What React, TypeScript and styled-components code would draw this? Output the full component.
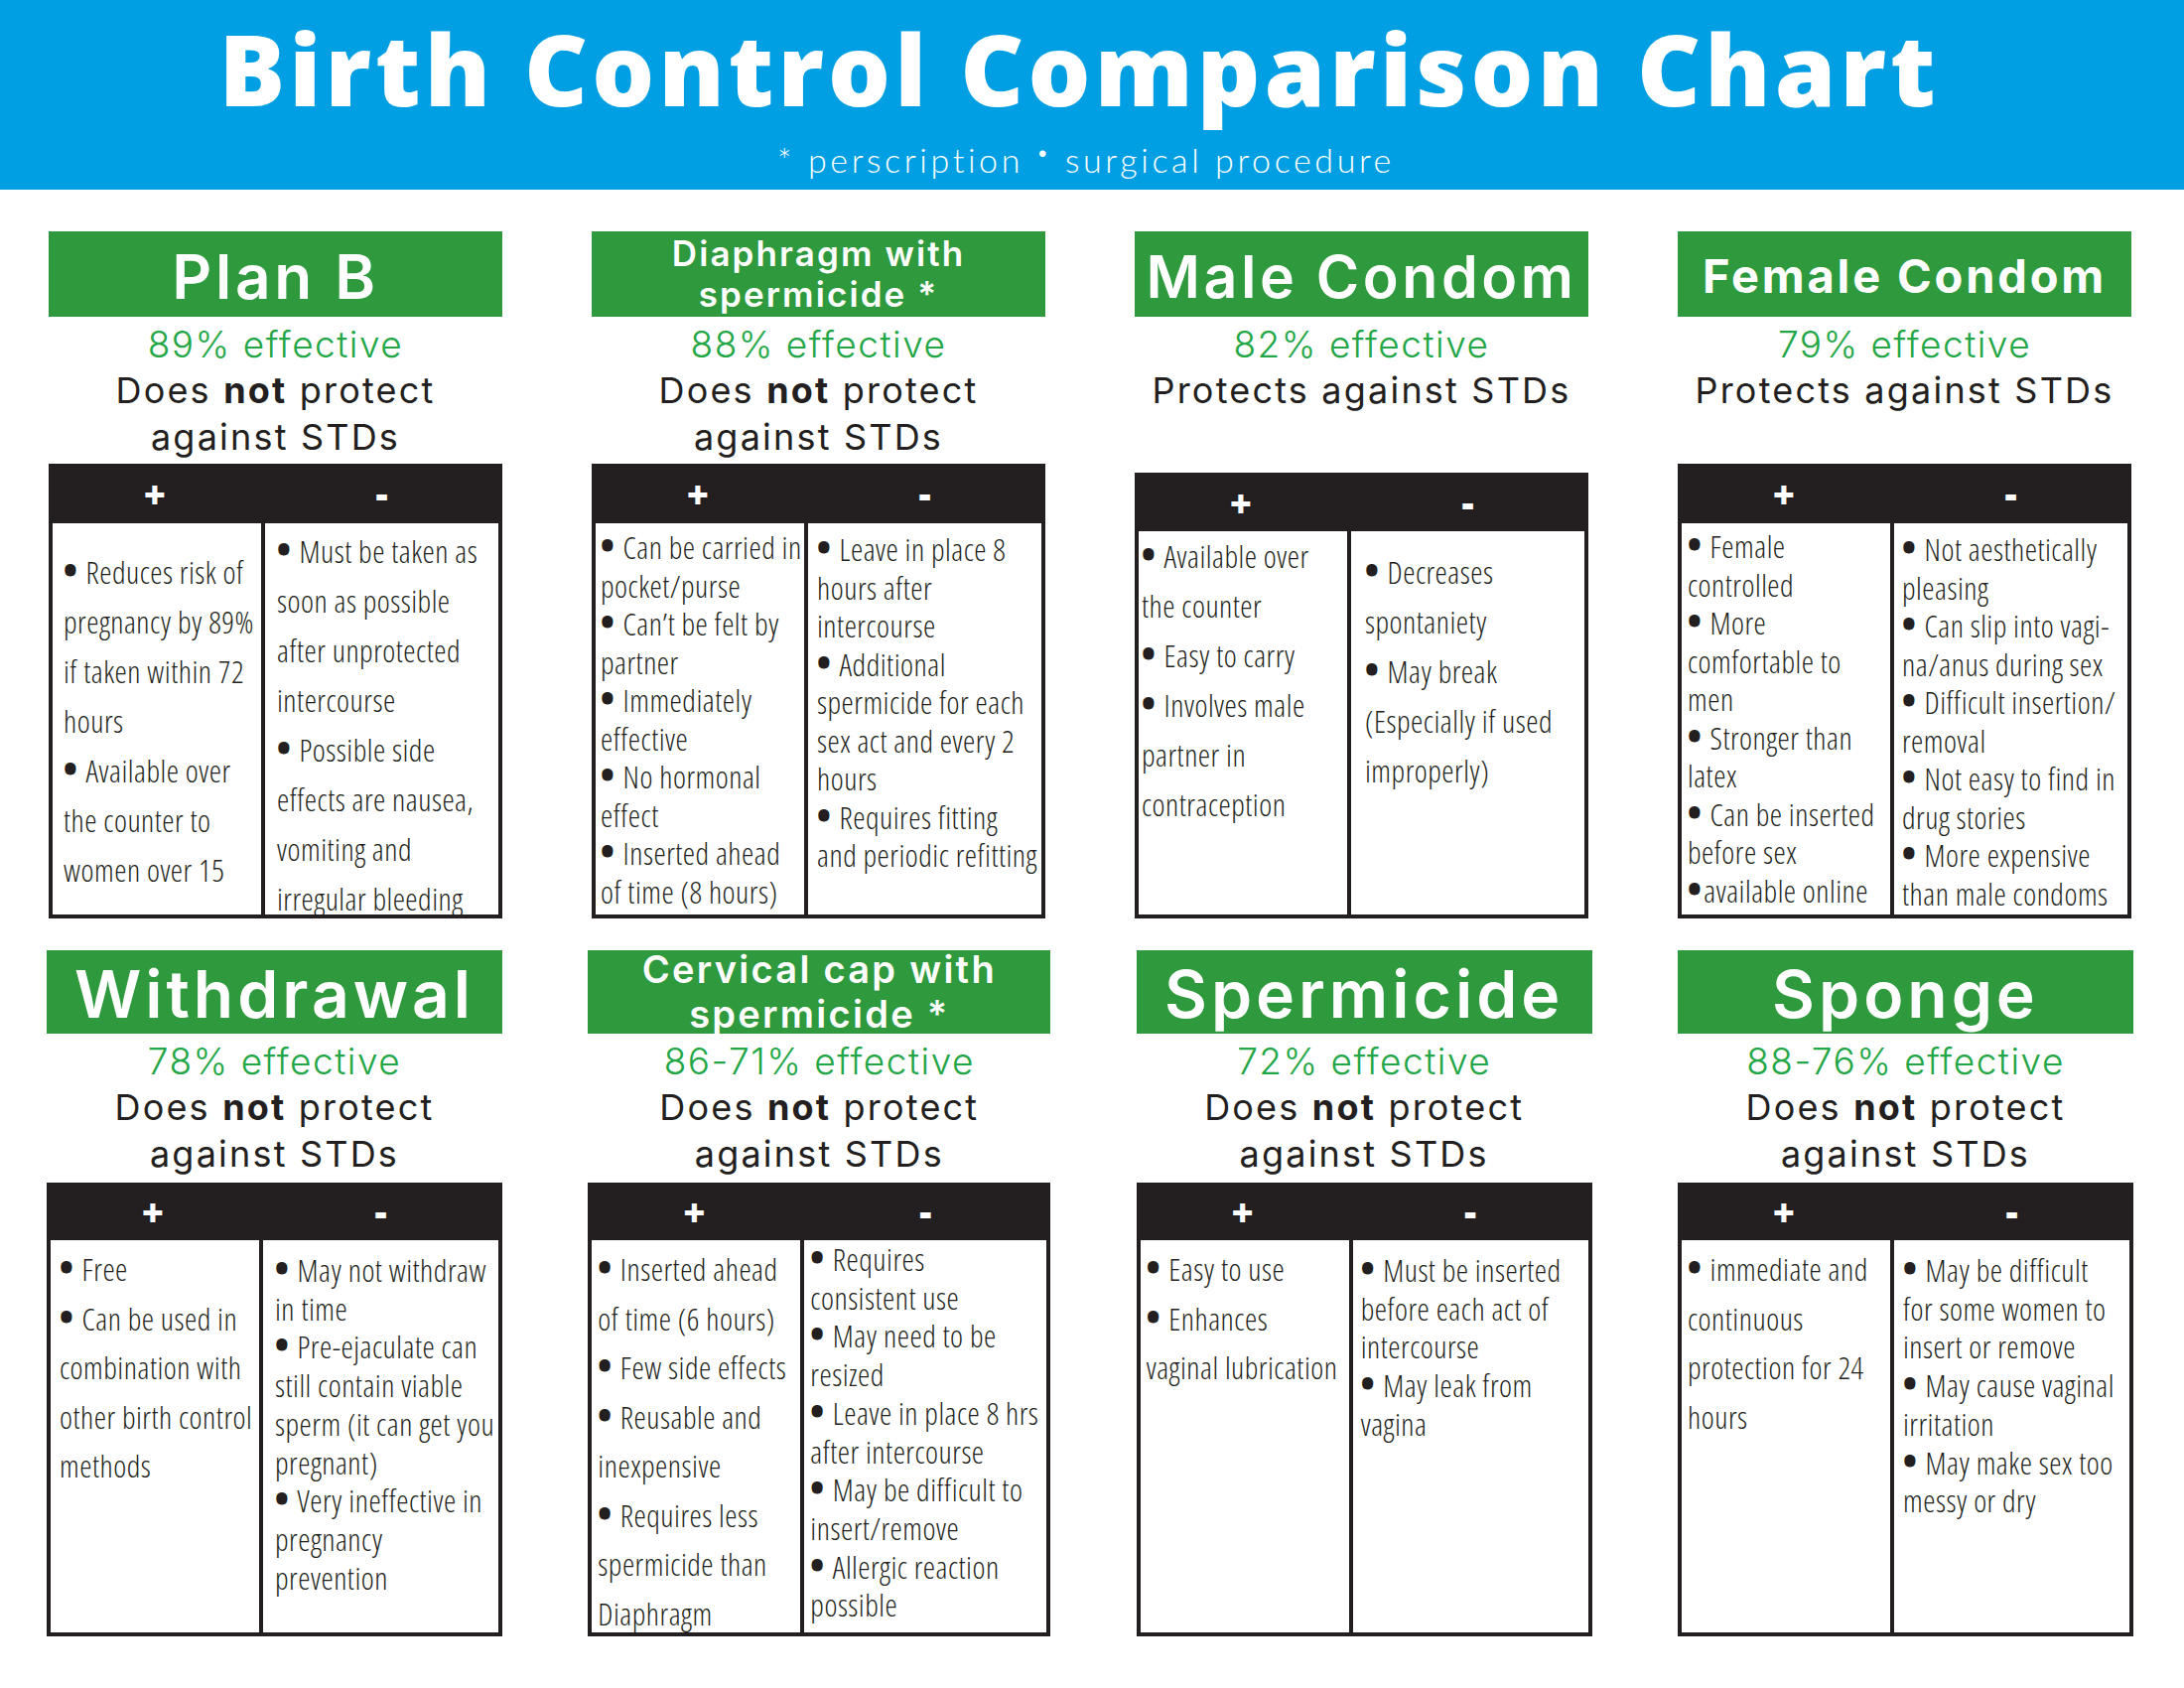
import React from "react";
import styled, { createGlobalStyle } from "styled-components";

const GlobalStyle = createGlobalStyle`
  html, body { margin: 0; padding: 0; background: #ffffff; }
  body { width: 2200px; height: 1700px; overflow: hidden; }
  *, *::before, *::after { box-sizing: border-box; }
`;

const INK = "#231f20";

const Page = styled.main`
  width: 2200px;
  height: 1700px;
  background: #ffffff;
  display: flex;
  flex-direction: column;
`;

const Header = styled.header`
  height: 191px;
  background: #009fe3;
  color: #ffffff;
  display: flex;
  flex-direction: column;
  align-items: center;
  padding-top: 19px;
`;

const Title = styled.h1`
  margin: 0 26px 0 0;
  font-family: "Open Sans", sans-serif;
  font-weight: 800;
  font-size: 99px;
  line-height: 99px;
  letter-spacing: 4.1px;
`;

const Subtitle = styled.p`
  margin: 15px 12px 0 0;
  font-family: Lato, sans-serif;
  font-weight: 300;
  font-size: 34px;
  line-height: 40px;
  letter-spacing: 3.6px;
`;

const Raised = styled.span`
  font-size: 22px;
  vertical-align: 13px;
`;

const Row = styled.section<{ $top: number; $left: number; $right: number }>`
  display: flex;
  justify-content: space-between;
  padding: ${(p) => p.$top}px ${(p) => p.$right}px 0 ${(p) => p.$left}px;
`;

const Card = styled.article<{ $w: number }>`
  width: ${(p) => p.$w}px;
  display: flex;
  flex-direction: column;
`;

const NameBox = styled.h2<{ $h: number; $size: number; $lh: number; $weight: number; $pt: number }>`
  margin: 0;
  height: ${(p) => p.$h}px;
  background: #2e9a3d;
  color: #ffffff;
  display: flex;
  align-items: center;
  justify-content: center;
  text-align: center;
  padding-top: ${(p) => p.$pt}px;
  font-family: Inter, sans-serif;
  font-weight: ${(p) => p.$weight};
  font-size: ${(p) => p.$size}px;
  line-height: ${(p) => p.$lh}px;
  letter-spacing: 0.06em;
  white-space: nowrap;
`;

const Info = styled.div<{ $h: number }>`
  height: ${(p) => p.$h}px;
  padding-top: 4px;
  text-align: center;
  font-family: Inter, sans-serif;
  color: ${INK};
`;

const Effective = styled.div`
  font-weight: 300;
  font-size: 37px;
  line-height: 47px;
  letter-spacing: 1.5px;
  color: #22a646;
`;

const Protect = styled.div`
  font-weight: 400;
  font-size: 36px;
  line-height: 47px;
  letter-spacing: 2.2px;
  white-space: nowrap;

  strong {
    font-weight: 700;
  }
`;

const Table = styled.div<{ $h: number }>`
  height: ${(p) => p.$h}px;
  display: flex;
  flex-direction: column;
`;

const HeadBar = styled.div<{ $h: number }>`
  height: ${(p) => p.$h}px;
  flex: none;
  background: ${INK};
  display: grid;
  grid-template-columns: 214px 1fr;
  align-items: center;
  text-align: center;
  color: #ffffff;
  font-family: "Open Sans", sans-serif;
  font-weight: 800;
  font-size: 38px;
  line-height: 1;
`;

const Body = styled.div`
  flex: 1;
  min-height: 0;
  display: grid;
  grid-template-columns: 210px 1fr;
  border: 4px solid ${INK};
  border-top: none;
  overflow: hidden;
`;

const Col = styled.div<{ $lh: number; $pt: number; $pl: number }>`
  padding: ${(p) => p.$pt}px 0 0 ${(p) => p.$pl}px;
  line-height: ${(p) => p.$lh}px;
  font-family: "Open Sans", sans-serif;
  font-weight: 300;
  font-stretch: 75%;
  font-size: 31px;
  letter-spacing: 0.5px;
  color: ${INK};
  white-space: nowrap;
  overflow: hidden;

  & + & {
    border-left: 4px solid ${INK};
  }
`;

const Item = styled.div``;

const Line = styled.div``;

const Dot = styled.span`
  font-weight: 800;
  font-size: 35px;
  line-height: 0;
  margin-right: 2px;
`;

type Side = { lh: number; pt: number; pl: number; items: string[][] };

type Method = {
  name: React.ReactNode;
  size: number;
  lh?: number;
  weight?: number;
  npt?: number;
  eff: string;
  protects: boolean;
  infoH: number;
  tableH: number;
  barH: number;
  w: number;
  pros: Side;
  cons: Side;
};

const row1: Method[] = [
  {
    name: "Plan B",
    size: 62,
    npt: 5,
    eff: "89% effective",
    protects: false,
    infoH: 148,
    tableH: 458,
    barH: 60,
    w: 457,
    pros: {
      lh: 50,
      pt: 24,
      pl: 11,
      items: [
        ["• Reduces risk of", "pregnancy by 89%", "if taken within 72", "hours"],
        ["• Available over", "the counter to", "women over 15"],
      ],
    },
    cons: {
      lh: 50,
      pt: 3,
      pl: 12,
      items: [
        ["• Must be taken as", "soon as possible", "after unprotected", "intercourse"],
        ["• Possible side", "effects are nausea,", "vomiting and", "irregular bleeding"],
      ],
    },
  },
  {
    name: (
      <>
        Diaphragm with
        <br />
        spermicide *
      </>
    ),
    size: 35,
    lh: 41,
    eff: "88% effective",
    protects: false,
    infoH: 148,
    tableH: 458,
    barH: 60,
    w: 457,
    pros: {
      lh: 38.5,
      pt: 5,
      pl: 5,
      items: [
        ["• Can be carried in", "pocket/purse"],
        ["• Can\u2019t be felt by", "partner"],
        ["• Immediately", "effective"],
        ["• No hormonal", "effect"],
        ["• Inserted ahead", "of time (8 hours)"],
      ],
    },
    cons: {
      lh: 38.5,
      pt: 7,
      pl: 9,
      items: [
        ["• Leave in place 8", "hours after", "intercourse"],
        ["• Additional", "spermicide for each", "sex act and every 2", "hours"],
        ["• Requires fitting", "and periodic refitting"],
      ],
    },
  },
  {
    name: "Male Condom",
    size: 59,
    npt: 4,
    eff: "82% effective",
    protects: true,
    infoH: 157,
    tableH: 449,
    barH: 59,
    w: 457,
    pros: {
      lh: 50,
      pt: 0,
      pl: 3,
      items: [["• Available over", "the counter"], ["• Easy to carry"], ["• Involves male", "partner in", "contraception"]],
    },
    cons: {
      lh: 50,
      pt: 16,
      pl: 14,
      items: [["• Decreases", "spontaniety"], ["• May break", "(Especially if used", "improperly)"]],
    },
  },
  {
    name: "Female Condom",
    size: 47,
    weight: 700,
    npt: 2,
    eff: "79% effective",
    protects: true,
    infoH: 148,
    tableH: 458,
    barH: 60,
    w: 457,
    pros: {
      lh: 38.5,
      pt: 4,
      pl: 6,
      items: [
        ["• Female", "controlled"],
        ["• More", "comfortable to", "men"],
        ["• Stronger than", "latex"],
        ["• Can be inserted", "before sex"],
        ["•available online"],
      ],
    },
    cons: {
      lh: 38.5,
      pt: 7,
      pl: 8,
      items: [
        ["• Not aesthetically", "pleasing"],
        ["• Can slip into vagi-", "na/anus during sex"],
        ["• Difficult insertion/", "removal"],
        ["• Not easy to find in", "drug stories"],
        ["• More expensive", "than male condoms"],
      ],
    },
  },
];

const row2: Method[] = [
  {
    name: "Withdrawal",
    size: 66,
    npt: 4,
    eff: "78% effective",
    protects: false,
    infoH: 150,
    tableH: 457,
    barH: 58,
    w: 459,
    pros: {
      lh: 49.5,
      pt: 5,
      pl: 9,
      items: [["• Free"], ["• Can be used in", "combination with", "other birth control", "methods"]],
    },
    cons: {
      lh: 38.7,
      pt: 11,
      pl: 12,
      items: [
        ["• May not withdraw", "in time"],
        ["• Pre-ejaculate can", "still contain viable", "sperm (it can get you", "pregnant)"],
        ["• Very ineffective in", "pregnancy", "prevention"],
      ],
    },
  },
  {
    name: (
      <>
        Cervical cap with
        <br />
        spermicide *
      </>
    ),
    size: 38,
    lh: 45,
    eff: "86-71% effective",
    protects: false,
    infoH: 150,
    tableH: 457,
    barH: 58,
    w: 466,
    pros: {
      lh: 49.5,
      pt: 5,
      pl: 6,
      items: [
        ["• Inserted ahead", "of time (6 hours)"],
        ["• Few side effects"],
        ["• Reusable and", "inexpensive"],
        ["• Requires less", "spermicide than", "Diaphragm"],
      ],
    },
    cons: {
      lh: 38.7,
      pt: 0,
      pl: 6,
      items: [
        ["• Requires", "consistent use"],
        ["• May need to be", "resized"],
        ["• Leave in place 8 hrs", "after intercourse"],
        ["• May be difficult to", "insert/remove"],
        ["• Allergic reaction", "possible"],
      ],
    },
  },
  {
    name: "Spermicide",
    size: 66,
    npt: 4,
    eff: "72% effective",
    protects: false,
    infoH: 150,
    tableH: 457,
    barH: 58,
    w: 459,
    pros: {
      lh: 49.5,
      pt: 5,
      pl: 6,
      items: [["• Easy to use"], ["• Enhances", "vaginal lubrication"]],
    },
    cons: {
      lh: 38.7,
      pt: 11,
      pl: 8,
      items: [["• Must be inserted", "before each act of", "intercourse"], ["• May leak from", "vagina"]],
    },
  },
  {
    name: "Sponge",
    size: 66,
    npt: 4,
    eff: "88-76% effective",
    protects: false,
    infoH: 150,
    tableH: 457,
    barH: 58,
    w: 459,
    pros: {
      lh: 49.5,
      pt: 5,
      pl: 6,
      items: [["• immediate and", "continuous", "protection for 24", "hours"]],
    },
    cons: {
      lh: 38.7,
      pt: 11,
      pl: 9,
      items: [
        ["• May be difficult", "for some women to", "insert or remove"],
        ["• May cause vaginal", "irritation"],
        ["• May make sex too", "messy or dry"],
      ],
    },
  },
];

function renderLine(text: string) {
  if (text.startsWith("•")) {
    return (
      <>
        <Dot>•</Dot>
        {text.slice(1)}
      </>
    );
  }
  return text;
}

function SideColumn({ side }: { side: Side }) {
  return (
    <Col $lh={side.lh} $pt={side.pt} $pl={side.pl}>
      {side.items.map((lines, i) => (
        <Item key={i}>
          {lines.map((l, j) => (
            <Line key={j}>{renderLine(l)}</Line>
          ))}
        </Item>
      ))}
    </Col>
  );
}

function MethodCard({ m, nameH }: { m: Method; nameH: number }) {
  return (
    <Card $w={m.w}>
      <NameBox $h={nameH} $size={m.size} $lh={m.lh ?? m.size} $weight={m.weight ?? 600} $pt={m.npt ?? 0}>
        <span>{m.name}</span>
      </NameBox>
      <Info $h={m.infoH}>
        <Effective>{m.eff}</Effective>
        {m.protects ? (
          <Protect>Protects against STDs</Protect>
        ) : (
          <Protect>
            Does <strong>not</strong> protect
            <br />
            against STDs
          </Protect>
        )}
      </Info>
      <Table $h={m.tableH}>
        <HeadBar $h={m.barH}>
          <span>+</span>
          <span>-</span>
        </HeadBar>
        <Body>
          <SideColumn side={m.pros} />
          <SideColumn side={m.cons} />
        </Body>
      </Table>
    </Card>
  );
}

export default function App() {
  return (
    <>
      <GlobalStyle />
      <Page>
        <Header>
          <Title>Birth Control Comparison Chart</Title>
          <Subtitle>
            * perscription <Raised>•</Raised> surgical procedure
          </Subtitle>
        </Header>
        <Row $top={42} $left={49} $right={53}>
          {row1.map((m, i) => (
            <MethodCard key={i} m={m} nameH={86} />
          ))}
        </Row>
        <Row $top={32} $left={47} $right={51}>
          {row2.map((m, i) => (
            <MethodCard key={i} m={m} nameH={84} />
          ))}
        </Row>
      </Page>
    </>
  );
}
